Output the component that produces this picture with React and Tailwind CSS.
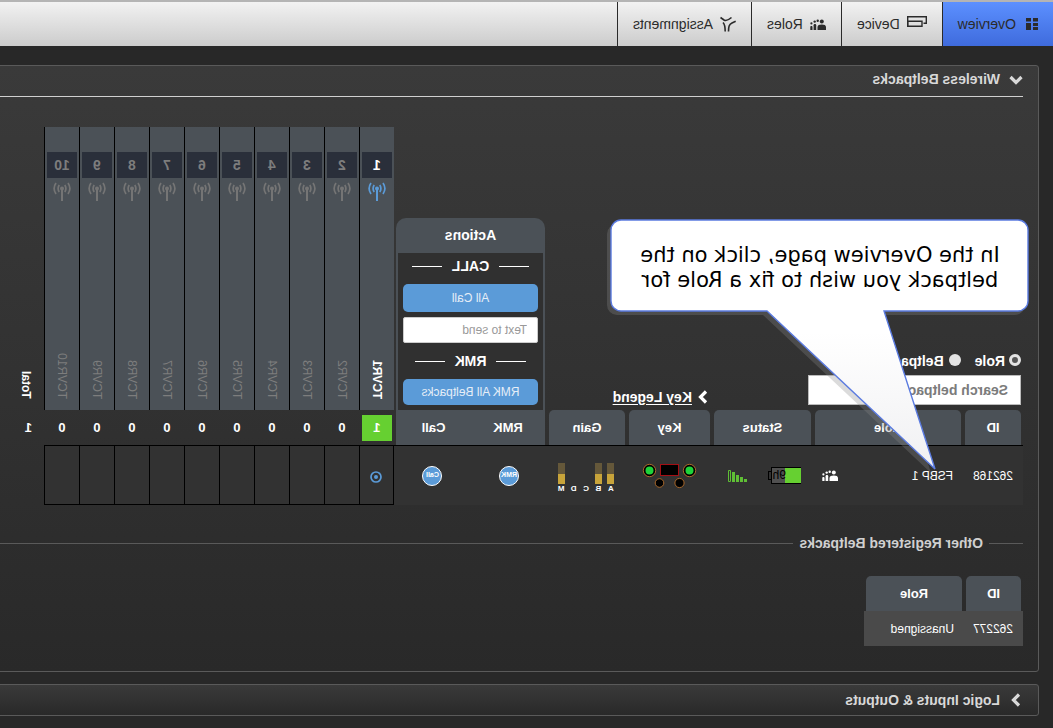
import { useState } from 'react';

const CHANNELS = [
    { id: 1, name: 'TCVR1', count: 1, active: true },
    { id: 2, name: 'TCVR2', count: 0 },
    { id: 3, name: 'TCVR3', count: 0 },
    { id: 4, name: 'TCVR4', count: 0 },
    { id: 5, name: 'TCVR5', count: 0 },
    { id: 6, name: 'TCVR6', count: 0 },
    { id: 7, name: 'TCVR7', count: 0 },
    { id: 8, name: 'TCVR8', count: 0 },
    { id: 9, name: 'TCVR9', count: 0 },
    { id: 10, name: 'TCVR10', count: 0 },
];

const METERS = [
    { label: 'A', on: true },
    { label: 'B', on: true },
    { label: 'C', on: false },
    { label: 'D', on: false },
    { label: 'M', on: true },
];

function OverviewIcon() {
    return (
        <svg width="15" height="12" viewBox="0 0 15 12" fill="currentColor" aria-hidden="true">
            <path d="M0 0h5v3.500H0zM0 5h5v3H0zM0 9h5v3H0zM7 0h5v3.500H7zM7 5h5v7H7z" />
        </svg>
    );
}

function DeviceIcon() {
    return (
        <svg width="20" height="16" viewBox="0 0 20 16" fill="none" stroke="currentColor" strokeWidth="1.4" aria-hidden="true">
            <path d="M3.500 7.300H.7V.7h18.600v9.600" />
            <path d="M5 5.200h14.300v5.100H5z" />
        </svg>
    );
}

function PeopleIcon() {
    return (
        <svg width="16" height="11" viewBox="0 0 16 11" fill="currentColor" aria-hidden="true">
            <circle cx="4.200" cy="2.600" r="2" />
            <path d="M0 11V8c0-1.900 1.600-2.600 4.200-2.600S8.500 6.100 8.500 8v3z" />
            <circle cx="8.300" cy="1.800" r="1.200" />
            <circle cx="11.300" cy="2.600" r="1.200" />
            <path d="M9.800 11V6.300c0-1.600 2.600-1.600 2.600 0V11z" />
            <circle cx="14.600" cy="4.400" r="1.100" />
            <path d="M13.500 11V8c0-1.400 2.200-1.400 2.200 0v3z" />
        </svg>
    );
}

function AssignIcon() {
    return (
        <svg width="16" height="16" viewBox="0 0 16 16" fill="none" stroke="currentColor" strokeWidth="1.600" aria-hidden="true">
            <path d="M15.500 1.500 12 4C10 5.200 8 4.500 4.500 1.500" />
            <path d="M.3 5.300 4 7c3 1.500 3.500 3.500 3.500 8.500" />
            <path d="M13 6.500c-2 2-2.200 4-2.200 9" />
        </svg>
    );
}

function ChevronIcon({ down }) {
    return (
        <svg
            width="14"
            height="14"
            viewBox="0 0 14 14"
            fill="none"
            stroke="currentColor"
            strokeWidth="3.200"
            className={down ? 'shrink-0' : 'shrink-0 -rotate-90'}
            aria-hidden="true"
        >
            <path d="M1.500 4 7 9.500 12.500 4" />
        </svg>
    );
}

function AntennaIcon() {
    return (
        <svg width="18" height="19" viewBox="0 0 18 19" fill="none" stroke="currentColor" strokeWidth="1.700" aria-hidden="true">
            <circle cx="9" cy="6.500" r="2" fill="currentColor" stroke="none" />
            <path d="M9 6.500V19" strokeWidth="2" />
            <path d="M6.200 3Q4 6.500 6.200 10M11.800 3Q14 6.500 11.800 10M3 1Q-.8 6.500 3 12M15 1Q18.800 6.500 15 12" />
        </svg>
    );
}

function BeltpackKeysIcon() {
    return (
        <svg width="56" height="26" viewBox="0 0 56 26" aria-label="Keys" role="img">
            <rect x="18.500" y="1.500" width="18" height="11" fill="#000" stroke="#a30f14" />
            <g fill="#1fd33a" stroke="#000" strokeWidth="2">
                <circle cx="7.500" cy="7.500" r="5" />
                <circle cx="47.500" cy="7.500" r="5" />
            </g>
            <g fill="none" stroke="#a8672a">
                <circle cx="7.500" cy="7.500" r="6.200" />
                <circle cx="47.500" cy="7.500" r="6.200" />
            </g>
            <g fill="#000" stroke="#a8672a">
                <circle cx="17.500" cy="20" r="4.600" />
                <circle cx="37.500" cy="20" r="4.300" />
            </g>
        </svg>
    );
}

function SignalIcon() {
    return (
        <svg width="19" height="12" viewBox="0 0 19 12" fill="#5fbf35" aria-label="Signal" role="img">
            <path d="M0 9h3v3H0zM4 7h3v5H4zM8 5h3v7H8zM12 2h3v10h-3z" />
            <path d="M16.500.5h2v11h-2z" fill="none" stroke="#5fbf35" />
        </svg>
    );
}

function Battery() {
    return (
        <div className="flex items-center">
            <div className="flex h-[17px] border-y border-black">
                <div className="w-4 bg-[#66d031]" />
                <div className="w-[14px] border-r border-black bg-[#505050]" />
            </div>
            <div className="h-[9px] w-[3px] border border-l-0 border-black" />
            <span className="absolute ml-[15px] text-[12px] leading-[15px] text-black">9h</span>
        </div>
    );
}

function NavTab({ icon, label, active, onClick }) {
    return (
        <button
            onClick={onClick}
            className={`flex h-11 items-center gap-[7px] border-r border-[#2a2a2a] px-[15px] text-[14px] text-[#2b2b2b] cursor-pointer ${
                active ? 'bg-linear-to-b from-[#5c90ff] to-[#3f6bdd]' : ''
            }`}
        >
            {icon}
            {label}
        </button>
    );
}

function HeadTab({ children }) {
    return (
        <div className="mx-[2px] flex h-[35px] items-center justify-center rounded-t-[5px] bg-[#4b5157]">
            {children}
        </div>
    );
}

function ActionTitle({ children }) {
    return (
        <div className="flex h-[26px] items-center justify-center gap-[10px] text-[14px]">
            <span className="h-px w-[30px] bg-white" />
            {children}
            <span className="h-px w-[30px] bg-white" />
        </div>
    );
}

function Callout() {
    return (
        <div className="absolute left-6 top-[219px] h-[252px] w-[424px] pointer-events-none">
            <svg width="424" height="254" viewBox="0 0 424 254" className="absolute inset-0" aria-hidden="true">
                <defs>
                    <linearGradient id="calloutFill" x1="0" y1="0" x2="0" y2="1">
                        <stop offset="0.450" stopColor="#ffffff" />
                        <stop offset="1" stopColor="#f0f0f2" />
                    </linearGradient>
                </defs>
                <path
                    d="M10 1H408a10 10 0 0 1 10 10V82a10 10 0 0 1 -10 10H262L94 250L145 92H10A10 10 0 0 1 0 82V11A10 10 0 0 1 10 1Z"
                    transform="translate(4 4)"
                    fill="#888888"
                    fillOpacity="0.300"
                />
                <path
                    d="M11 1H408a10 10 0 0 1 10 10V82a10 10 0 0 1 -10 10H262L94 250L145 92H11A10 10 0 0 1 1 82V11A10 10 0 0 1 11 1Z"
                    fill="url(#calloutFill)"
                    stroke="#5b7be0"
                    strokeWidth="1.400"
                />
            </svg>
            <p className="relative w-[418px] pt-6 text-center font-['DejaVu_Sans',sans-serif] text-[21px] leading-[25px] text-black">
                In the Overview page, click on the
                <br />
                beltpack you wish to fix a Role for
            </p>
        </div>
    );
}

function ActionsBox() {
    return (
        <div className="mx-[2px] rounded-t-[10px] bg-[#4b5157] px-[2px] text-white">
            <div className="flex h-[35px] items-center justify-center text-[14px]">Actions</div>
            <div className="flex flex-col bg-[#303030] px-[5px] pb-[5px]">
                <ActionTitle>CALL</ActionTitle>
                <button className="mt-[5px] h-7 rounded-[5px] bg-[#5b9bd8] text-[12px] font-normal text-[#e6eef7]">
                    All Call
                </button>
                <input
                    type="text"
                    aria-label="Text to send"
                    placeholder="Text to send"
                    className="mt-[5px] h-[26px] w-full rounded-[2px] border border-[#cccccc] bg-white px-[10px] text-[12px] font-normal text-black placeholder:text-[#999999]"
                />
                <div className="mt-[5px]">
                    <ActionTitle>RMK</ActionTitle>
                </div>
                <button className="mt-[5px] h-[26px] rounded-[5px] bg-[#5b9bd8] text-[12px] font-normal text-[#e6eef7]">
                    RMK All Beltpacks
                </button>
            </div>
        </div>
    );
}

function SearchBlock() {
    const [mode, setMode] = useState('role');
    const radio =
        'm-0 size-3 appearance-none rounded-full bg-[#e4e4e4] checked:border-[3px] checked:border-[#e4e4e4] checked:bg-[#555555]';

    return (
        <div className="ml-[2px] mb-[5px] w-[213px] text-left text-[14px] text-white">
            <div className="mb-[5px] flex h-5 items-center">
                <input id="by-role" type="radio" name="by" checked={mode === 'role'} onChange={() => setMode('role')} className={radio} />
                <label htmlFor="by-role" className="ml-1 mr-[14px] pt-[2px]">Role</label>
                <input id="by-beltpack" type="radio" name="by" checked={mode === 'beltpack'} onChange={() => setMode('beltpack')} className={radio} />
                <label htmlFor="by-beltpack" className="ml-[5px] pt-[2px]">Beltpack</label>
            </div>
            <input
                type="text"
                aria-label="Search beltpacks"
                placeholder="Search beltpacks"
                className="block h-[30px] w-full border border-[#bbbbbb] bg-white px-3 text-[14px] font-bold text-black placeholder:text-[#7b7b7b]"
            />
        </div>
    );
}

function BeltpackTable() {
    return (
        <table className="mt-[30px] w-[1014px] table-fixed border-separate border-spacing-0 text-white">
            <colgroup>
                <col className="w-[60px]" />
                <col className="w-[150px]" />
                <col className="w-[101px]" />
                <col className="w-[85px]" />
                <col className="w-[80px]" />
                <col className="w-[76px]" />
                <col className="w-[77px]" />
                {CHANNELS.map((c) => (
                    <col key={c.id} className="w-[35px]" />
                ))}
                <col className="w-[35px]" />
            </colgroup>
            <thead className="text-[13px] font-bold">
                <tr className="h-[283px]">
                    <td colSpan={3} className="p-0 align-bottom">
                        <SearchBlock />
                    </td>
                    <td colSpan={2} className="p-0 align-bottom">
                        <a href="#legend" className="mb-[5px] ml-[2px] flex h-4 items-center gap-1 text-[14px]">
                            <ChevronIcon />
                            <span className="underline underline-offset-2">Key Legend</span>
                        </a>
                    </td>
                    <td colSpan={2} className="p-0 align-bottom">
                        <ActionsBox />
                    </td>
                    {CHANNELS.map((c) => (
                        <th
                            key={c.id}
                            className={`border-r border-black bg-[#4b5157] p-0 align-top ${c.active ? 'text-white' : 'text-[#7d7d7d]'}`}
                        >
                            <div className="flex h-[283px] flex-col items-center pt-[25px]">
                                <div className="flex h-[26px] w-[30px] items-center justify-center bg-[#2a2f3a] text-[14px]">
                                    {c.id}
                                </div>
                                <div className={c.active ? 'mt-1 text-[#5b9bd8]' : 'mt-1 text-[#757575]'}>
                                    <AntennaIcon />
                                </div>
                                <span
                                    className={`mt-auto mb-[11px] rotate-180 text-[12px] [writing-mode:vertical-rl] ${
                                        c.active ? '' : 'font-normal'
                                    }`}
                                >
                                    {c.name}
                                </span>
                            </div>
                        </th>
                    ))}
                    <th className="p-0 align-bottom">
                        <div className="flex justify-center pb-[11px]">
                            <span className="rotate-180 text-[12px] leading-4 [writing-mode:vertical-rl]">Total</span>
                        </div>
                    </th>
                </tr>
                <tr className="h-9">
                    <th className="border-b border-black p-0"><HeadTab>ID</HeadTab></th>
                    <th className="border-b border-black p-0"><HeadTab>Role</HeadTab></th>
                    <th className="border-b border-black p-0"><HeadTab>Status</HeadTab></th>
                    <th className="border-b border-black p-0"><HeadTab>Key</HeadTab></th>
                    <th className="border-b border-black p-0"><HeadTab>Gain</HeadTab></th>
                    <th className="border-b border-black p-0">
                        <div className="ml-[2px] flex h-[35px] items-center justify-center bg-[#4b5157]">RMK</div>
                    </th>
                    <th className="border-b border-black p-0">
                        <div className="mr-[2px] flex h-[35px] items-center justify-center bg-[#4b5157]">Call</div>
                    </th>
                    {CHANNELS.map((c) => (
                        <td key={c.id} className="border-b border-black p-0 pr-px text-center">
                            <div
                                className={`mx-auto flex h-[26px] w-[30px] items-center justify-center ${c.count ? 'bg-[#66d031]' : ''}`}
                            >
                                {c.count}
                            </div>
                        </td>
                    ))}
                    <td className="p-0 pr-1 text-center">1</td>
                </tr>
            </thead>
            <tbody className="text-[12px]">
                <tr className="h-[59px]">
                    <td className="bg-[#323232] p-0 pl-[10px]">262168</td>
                    <td className="bg-[#323232] p-0 pl-[10px] pr-[9px]">
                        <div className="flex items-center justify-between">
                            FSBP 1
                            <PeopleIcon />
                        </div>
                    </td>
                    <td className="bg-[#323232] p-0">
                        <div className="flex items-center pl-3">
                            <Battery />
                            <span className="ml-[21px]"><SignalIcon /></span>
                        </div>
                    </td>
                    <td className="bg-[#323232] p-0">
                        <div className="flex justify-center">
                            <BeltpackKeysIcon />
                        </div>
                    </td>
                    <td className="bg-[#323232] p-0">
                        <div className="ml-[10px] mt-[6px] grid w-[62px] grid-cols-5 justify-items-center">
                            {METERS.map((m) => (
                                <div key={m.label} className="flex flex-col items-center">
                                    <div className="h-[21px] w-[7px]">
                                        {m.on && (
                                            <>
                                                <div className="h-[11px] bg-[#65583a]" />
                                                <div className="h-[10px] bg-[#c8a43a]" />
                                            </>
                                        )}
                                    </div>
                                    <span className="text-[8px] font-bold leading-[10px]">{m.label}</span>
                                </div>
                            ))}
                        </div>
                    </td>
                    <td className="bg-[#323232] p-0">
                        <button className="mx-auto flex size-5 items-center justify-center rounded-full border border-white bg-[#5b9bd8] text-[7px] font-bold">
                            RMK
                        </button>
                    </td>
                    <td className="bg-[#323232] p-0">
                        <button className="mx-auto flex size-5 items-center justify-center rounded-full border border-white bg-[#5b9bd8] text-[7px] font-bold">
                            Call
                        </button>
                    </td>
                    {CHANNELS.map((c) => (
                        <td key={c.id} className={`border-b border-r border-black bg-[#323232] p-0 ${c.active ? 'border-l' : ''}`}>
                            {c.active && (
                                <svg width="12" height="12" viewBox="0 0 12 12" className="mx-auto mt-[3px]" aria-label="On" role="img">
                                    <circle cx="6" cy="6" r="5" fill="none" stroke="#5b9bd8" strokeWidth="1.700" />
                                    <circle cx="6" cy="6" r="2" fill="#5b9bd8" />
                                </svg>
                            )}
                        </td>
                    ))}
                    <td />
                </tr>
            </tbody>
        </table>
    );
}

export default function App() {
    const [tab, setTab] = useState('Overview');

    const tabs = [
        { label: 'Overview', icon: <OverviewIcon /> },
        { label: 'Device', icon: <DeviceIcon /> },
        { label: 'Roles', icon: <PeopleIcon /> },
        { label: 'Assignments', icon: <AssignIcon /> },
    ];

    return (
        <div className="relative min-h-screen -scale-x-100 overflow-hidden bg-[#282828] pb-3 font-['Liberation_Sans',Arial,sans-serif]">
            <nav className="flex border-t-2 border-[#b4b4b4] bg-linear-to-b from-[#f2f2f2] to-[#cccccc]">
                {tabs.map((t) => (
                    <NavTab key={t.label} {...t} active={tab === t.label} onClick={() => setTab(t.label)} />
                ))}
            </nav>

            <section className="-mr-4 ml-[14px] mt-[19px] rounded-[3px] border border-[#5a5a5a] bg-linear-to-b from-[#3a3a3a] via-[#323232] to-[#292929] pl-[15px] pb-[25px]">
                <h2 className="flex h-[31px] items-center gap-[9px] border-b border-[#d0d0d0] pb-[3px] text-[14px] font-bold text-[#d8d8d8]">
                    <ChevronIcon down />
                    Wireless Beltpacks
                </h2>

                <BeltpackTable />

                <h3 className="mt-7 flex items-center gap-[6px] text-[14px] leading-5 font-bold text-[#d0d0d0]">
                    <span className="h-px w-[34px] bg-[#5a5a5a]" />
                    Other Registered Beltpacks
                    <span className="h-px flex-1 bg-[#5a5a5a]" />
                </h3>

                <table className="mt-[23px] border-separate border-spacing-0 text-white">
                    <thead className="text-[13px]">
                        <tr>
                            <th className="w-[59px] p-0"><HeadTab>ID</HeadTab></th>
                            <th className="w-[100px] p-0"><HeadTab>Role</HeadTab></th>
                        </tr>
                    </thead>
                    <tbody className="text-[12px]">
                        <tr className="h-[35px] bg-[#4a4a4a]">
                            <td className="p-0 pl-[10px]">262277</td>
                            <td className="p-0 pl-[10px]">Unassigned</td>
                        </tr>
                    </tbody>
                </table>
            </section>

            <section className="-mr-4 ml-[14px] mt-3 rounded-[3px] border border-[#5a5a5a] bg-linear-to-b from-[#3a3a3a] to-[#292929] pl-[15px]">
                <h2 className="flex h-[30px] items-center gap-[9px] text-[14px] font-bold text-[#d8d8d8]">
                    <ChevronIcon />
                    Logic Inputs &amp; Outputs
                </h2>
            </section>

            <Callout />
        </div>
    );
}
